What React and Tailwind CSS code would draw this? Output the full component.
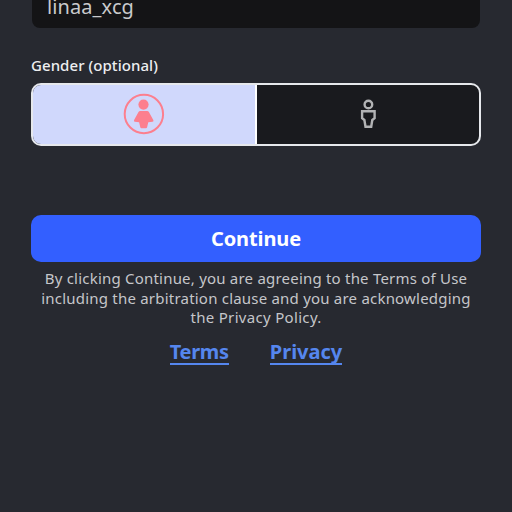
import React, { useState } from 'react';

const FemaleIcon = ({ selected }) => (
  <svg width="42" height="42" viewBox="0 0 42 42" className={selected ? 'text-[#fc7f8e]' : 'text-[#b5b6b8]'}>
    <circle cx="20.9" cy="21" r="19.2" fill="none" stroke="currentColor" strokeWidth="2" />
    <circle cx="20.5" cy="11.6" r="5.1" fill="currentColor" />
    <path
      d="M17.2 17.9h7q1.1 0 1.7 1.1l4.4 7.9q.7 1.5-.8 1.8l-4.2.6-1.2 5q-.2 1-1.2 1h-4.4q-1 0-1.2-1l-1.2-5-4.2-.6q-1.5-.3-.8-1.8l4.4-7.9q.6-1.1 1.7-1.1z"
      fill="currentColor"
    />
  </svg>
);

const MaleIcon = ({ selected }) => (
  <svg
    width="16"
    height="30"
    viewBox="0 0 16 30"
    fill="none"
    stroke="currentColor"
    strokeWidth="2.4"
    className={selected ? 'text-[#335fff]' : 'text-[#b2b3b5]'}
  >
    <circle cx="8.4" cy="5.5" r="3.8" />
    <path d="M2.1 12.3h12.5v6.9l-2.3 1.8-1.1 6.8H5.5l-1.1-6.8-2.3-1.8z" />
  </svg>
);

export default function App() {
  const [gender, setGender] = useState('female');

  return (
    <div className="h-screen w-full overflow-hidden bg-[#272930] px-[31px] font-['Noto_Sans',sans-serif]">
      {/* Username */}
      <div className="mx-px flex h-7 items-end rounded-b-lg bg-[#141416] px-[15px] pb-[7px]">
        <span className="text-xl leading-7 tracking-[0.1px] text-[#c9cacc]">linaa_xcg</span>
      </div>

      {/* Gender */}
      <p className="mt-[27px] h-7 text-[15px] leading-5 font-medium tracking-[0.06px] text-[#eeeff1]">Gender (optional)</p>
      <div className="flex h-[63px] overflow-hidden rounded-[10px] border-2 border-[#e6e8ec] bg-[#191a1e]">
        <button
          onClick={() => setGender('female')}
          className={`flex flex-1 items-center justify-center border-r-2 border-white pb-[2px] ${gender === 'female' ? 'bg-[#d0d8fc]' : ''}`}
        >
          <FemaleIcon selected={gender === 'female'} />
        </button>
        <button
          onClick={() => setGender('male')}
          className={`flex flex-1 items-center justify-center pb-[2px] ${gender === 'male' ? 'bg-[#d0d8fc]' : ''}`}
        >
          <MaleIcon selected={gender === 'male'} />
        </button>
      </div>

      <button className="mt-[69px] flex h-[47px] w-full items-center justify-center rounded-[10px] bg-[#335fff] text-xl font-bold tracking-[-0.1px] text-white">
        Continue
      </button>

      <p className="mt-[7px] text-center text-[15px] leading-[19.5px] tracking-[0.21px] whitespace-nowrap text-[#c5c6ca]">
        <span>By clicking Continue, you are agreeing to the Terms of Use</span>
        <br />
        <span>including the arbitration clause and you are acknowledging</span>
        <br />
        <span className="tracking-[0.32px]">the Privacy Policy.</span>
      </p>

      <div className="mt-3 flex justify-center gap-[41px] text-xl leading-6 font-bold text-[#5586ee]">
        <a className="h-[25px] border-b-2 border-[#5586ee] tracking-[-0.3px]">Terms</a>
        <a className="h-[25px] border-b-2 border-[#5586ee]">Privacy</a>
      </div>
    </div>
  );
}
